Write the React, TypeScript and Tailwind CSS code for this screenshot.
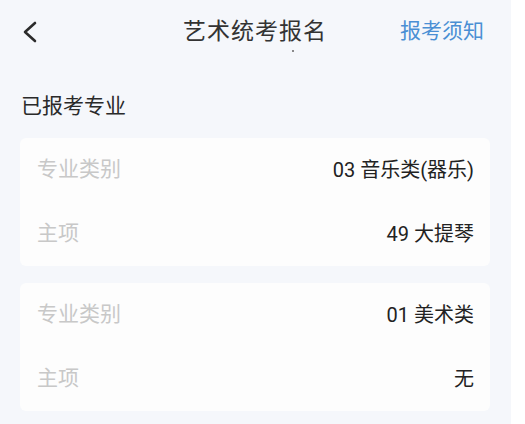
import React from 'react';

type Row = { label: string; value: string };

const majors: Row[][] = [
    [
        { label: '专业类别', value: '03 音乐类(器乐)' },
        { label: '主项', value: '49 大提琴' },
    ],
    [
        { label: '专业类别', value: '01 美术类' },
        { label: '主项', value: '无' },
    ],
];

const ChevronLeft = () => (
    <svg width="16" height="22" viewBox="0 0 16 22" fill="none">
        <path d="M13 2 L3 11 L13 20" stroke="#2b2b2b" strokeWidth="2.6" strokeLinecap="round" strokeLinejoin="round" />
    </svg>
);

const App: React.FC = () => {
    return (
        <div
            className="flex w-[525px] h-[424px] overflow-hidden bg-white"
            style={{ fontFamily: 'Roboto, "Noto Sans CJK SC", sans-serif' }}
        >
            <div className="w-[511px] h-full bg-[#f5f7fb] flex flex-col">
                {/* Header */}
                <div className="relative h-[64px] flex items-center pl-5 pr-[27px]">
                    <button className="w-[110px] h-full flex items-center pl-[2px]">
                        <ChevronLeft />
                    </button>
                    <h1 className="flex-1 text-center text-[23px] tracking-[1px] text-[#333333] pl-[6px]">艺术统考报名</h1>
                    <span className="w-[110px] text-right text-[21px] text-[#4a8fd4]">报考须知</span>
                    <span className="absolute left-[292px] top-[50px] w-[2px] h-[2px] rounded-full bg-[#666]" />
                </div>

                {/* Section title */}
                <div className="pl-[21px] pt-[29px] pb-[19px] text-[21px] leading-[26px] text-[#2a2a2a]">已报考专业</div>

                {/* Cards */}
                <div className="flex flex-col gap-[17px] pl-[20px] pr-[21px]">
                    {majors.map((rows, i) => (
                        <div key={i} className="bg-[#fdfdfd] rounded-[6px] h-[128px] flex flex-col">
                            {rows.map((row) => (
                                <div key={row.label} className="flex-1 flex items-center justify-between pl-[17px] pr-[16px]">
                                    <span className="text-[21px] text-[#c8c8c8]">{row.label}</span>
                                    <span className="text-[20px] text-[#222222]">{row.value}</span>
                                </div>
                            ))}
                        </div>
                    ))}
                </div>
            </div>
        </div>
    );
};

export default App;
